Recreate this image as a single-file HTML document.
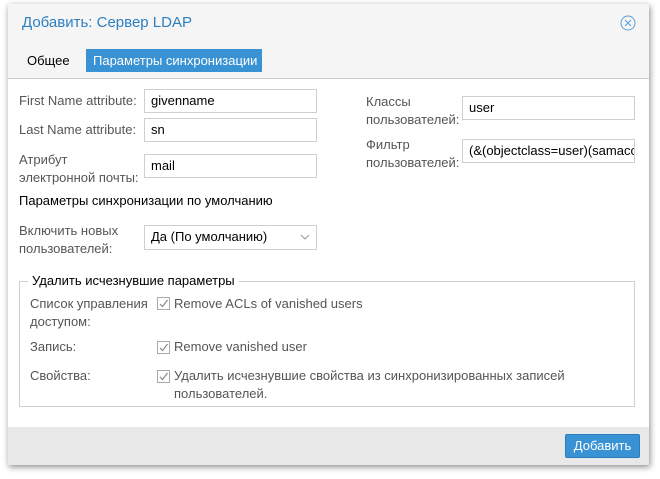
<!DOCTYPE html>
<html><head><meta charset="utf-8"><style>
*{box-sizing:border-box;margin:0;padding:0}
body{width:660px;height:479px;background:#fff;position:relative;overflow:hidden;font-family:"Liberation Sans",sans-serif;font-size:13px;color:#000}
.win{position:absolute;left:8px;top:4px;width:641px;height:461px;background:#fff;box-shadow:1px 2px 6px rgba(0,0,0,.45)}
.hdr{position:absolute;left:0;top:0;width:641px;height:75px;background:#f5f5f5;border-bottom:1px solid #cfcfcf}
.ftr{position:absolute;left:0;top:423px;width:641px;height:38px;background:#e8e8e8}
.a{position:absolute;white-space:nowrap}
.lbl{color:#555;line-height:18px}
.inp{position:absolute;border:1px solid #cfcfcf;background:#fff;padding-left:6px;line-height:22px;overflow:hidden;white-space:nowrap;color:#000}
.cb{position:absolute;width:13px;height:13px;border:1px solid #aaa;background:#fff}
.cb svg{position:absolute;left:0;top:0}
</style></head><body>
<div class="win">
<div class="hdr"></div>
<div class="ftr"></div>
</div>
<div class="a" style="left:22px;top:14px;font-size:15px;color:#2c7fc1">Добавить: Сервер LDAP</div>
<svg class="a" style="left:620px;top:15px" width="16" height="16" viewBox="0 0 16 16"><circle cx="8" cy="8" r="7" fill="none" stroke="#5aa0d8" stroke-width="1"/><path d="M5 5L11 11M11 5L5 11" stroke="#5aa0d8" stroke-width="1"/></svg>
<div class="a" style="left:27px;top:53px">Общее</div>
<div class="a" style="left:86px;top:49px;width:176px;height:23px;background:#3892d4;color:#fff;padding-left:7px;line-height:23px">Параметры синхронизации</div>

<div class="a lbl" style="left:19px;top:92px">First Name attribute:</div>
<div class="inp" style="left:144px;top:89px;width:173px;height:24px">givenname</div>
<div class="a lbl" style="left:19px;top:121px">Last Name attribute:</div>
<div class="inp" style="left:144px;top:118px;width:173px;height:24px">sn</div>
<div class="a lbl" style="left:19px;top:151px">Атрибут<br>электронной почты:</div>
<div class="inp" style="left:144px;top:154px;width:173px;height:24px">mail</div>

<div class="a lbl" style="left:366px;top:93px">Классы<br>пользователей:</div>
<div class="inp" style="left:462px;top:96px;width:173px;height:24px">user</div>
<div class="a lbl" style="left:366px;top:136px">Фильтр<br>пользователей:</div>
<div class="inp" style="left:462px;top:139px;width:173px;height:24px">(&amp;(objectclass=user)(samaccountname=*)</div>

<div class="a" style="left:19px;top:193px">Параметры синхронизации по умолчанию</div>
<div class="a lbl" style="left:19px;top:222px">Включить новых<br>пользователей:</div>
<div class="inp" style="left:144px;top:225px;width:173px;height:25px">Да (По умолчанию)</div>
<svg class="a" style="left:300px;top:233px" width="10" height="8" viewBox="0 0 10 8"><path d="M1 2L5 6L9 2" fill="none" stroke="#999" stroke-width="1"/></svg>

<div class="a" style="left:19px;top:281px;width:616px;height:126px;border:1px solid #cfcfcf"></div>
<div class="a" style="left:28px;top:273px;background:#fff;padding:0 4px">Удалить исчезнувшие параметры</div>

<div class="a lbl" style="left:30px;top:295px">Список управления<br>доступом:</div>
<div class="cb" style="left:157px;top:297px"><svg width="11" height="11" viewBox="0 0 11 11"><path d="M2 6L4.5 8.5L9.5 2" fill="none" stroke="#888" stroke-width="1.2"/></svg></div>
<div class="a lbl" style="left:174px;top:295px">Remove ACLs of vanished users</div>

<div class="a lbl" style="left:30px;top:338px">Запись:</div>
<div class="cb" style="left:157px;top:341px"><svg width="11" height="11" viewBox="0 0 11 11"><path d="M2 6L4.5 8.5L9.5 2" fill="none" stroke="#888" stroke-width="1.2"/></svg></div>
<div class="a lbl" style="left:174px;top:338px">Remove vanished user</div>

<div class="a lbl" style="left:30px;top:367px">Свойства:</div>
<div class="cb" style="left:157px;top:370px"><svg width="11" height="11" viewBox="0 0 11 11"><path d="M2 6L4.5 8.5L9.5 2" fill="none" stroke="#888" stroke-width="1.2"/></svg></div>
<div class="a lbl" style="left:174px;top:367px">Удалить исчезнувшие свойства из синхронизированных записей<br>пользователей.</div>

<div class="a" style="left:565px;top:434px;width:75px;height:24px;background:#3892d4;border:1px solid #2a7cc0;border-radius:2px;color:#fff;text-align:center;line-height:22px">Добавить</div>
</body></html>
